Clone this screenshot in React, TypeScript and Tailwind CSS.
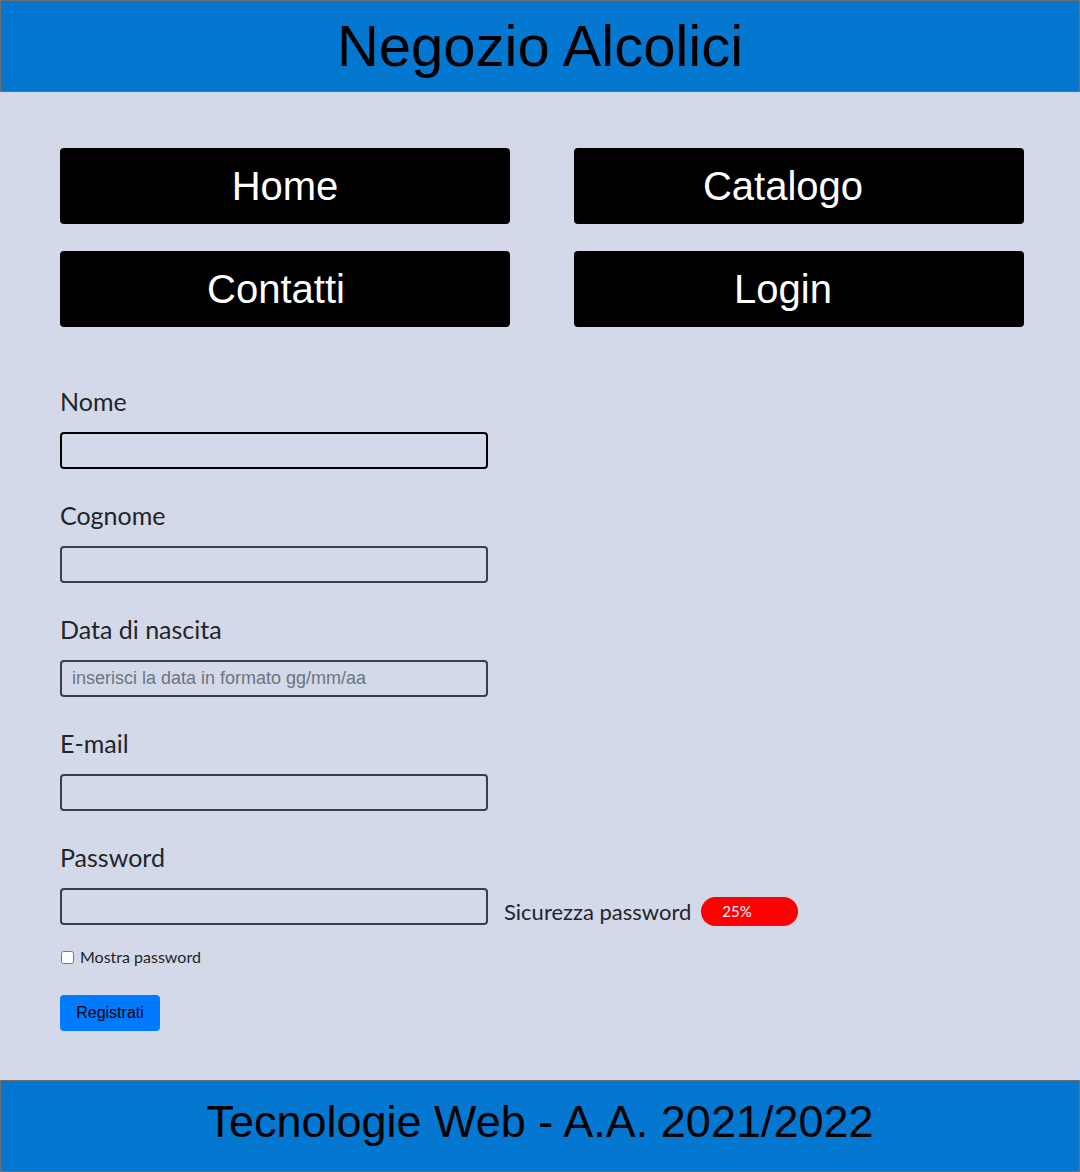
import React from "react"

const navItems = [
  { label: "Home", pad: "" },
  { label: "Catalogo", pad: "pr-[32px]" },
  { label: "Contatti", pad: "pr-[18px]" },
  { label: "Login", pad: "pr-[32px]" },
]

const fields = [
  { label: "Nome", placeholder: "", focused: true },
  { label: "Cognome", placeholder: "", focused: false },
  { label: "Data di nascita", placeholder: "inserisci la data in formato gg/mm/aa", focused: false },
  { label: "E-mail", placeholder: "", focused: false },
]

function Field({ label, placeholder, focused }: { label: string; placeholder: string; focused: boolean }) {
  return (
    <div className="mb-[28px]">
      <label className="block text-[25px] leading-[36px] mb-[13px] text-[#212529] font-['Lato',sans-serif]">{label}</label>
      <input
        type="text"
        placeholder={placeholder}
        className={
          "block w-[428px] h-[37px] rounded-[4px] border-2 bg-transparent px-[10px] text-[18px] font-['Liberation_Sans',Arial,sans-serif] placeholder:text-[#6c757d] outline-none " +
          (focused ? "border-black" : "border-[#3b3f45]")
        }
      />
    </div>
  )
}

export default function App() {
  return (
    <div className="min-h-screen flex flex-col bg-[#d3d9e9]">
      {/* Header */}
      <header className="h-[92px] flex items-center justify-center bg-[#0477d1] border border-[#6f6f6f]">
        <h1 className="text-[58px] leading-none text-black font-['Liberation_Sans',Arial,sans-serif]">Negozio Alcolici</h1>
      </header>

      {/* Content */}
      <main className="flex-1 px-[60px] pt-[56px] pb-[49px]">
        <nav className="grid grid-cols-2 gap-x-[64px] gap-y-[27px] w-[964px]">
          {navItems.map((item) => (
            <a
              key={item.label}
              href="#"
              className={
                "h-[76px] flex items-center justify-center rounded-[4px] bg-black text-white text-[40px] font-['Liberation_Sans',Arial,sans-serif] " +
                item.pad
              }
            >
              {item.label}
            </a>
          ))}
        </nav>

        <form className="mt-[56px]">
          {fields.map((f) => (
            <Field key={f.label} {...f} />
          ))}

          <div>
            <label className="block text-[25px] leading-[36px] mb-[13px] text-[#212529] font-['Lato',sans-serif]">Password</label>
            <div className="flex items-center h-[37px]">
              <input
                type="password"
                className="block w-[428px] h-[37px] rounded-[4px] border-2 border-[#3b3f45] bg-transparent px-[10px] outline-none"
              />
              <div className="flex items-center mt-[10px]">
                <span className="ml-[16px] text-[22px] leading-[32px] text-[#212529] font-['Lato',sans-serif]">Sicurezza password</span>
                <span className="ml-[10px] w-[97px] h-[29px] flex items-center pl-[21px] rounded-full bg-[#ff0000] text-white text-[15px] font-['Lato',sans-serif]">
                  25%
                </span>
              </div>
            </div>
          </div>

          <label className="mt-[21px] flex items-center gap-[6px] text-[16px] leading-[22px] text-[#212529] font-['Lato',sans-serif]">
            <input type="checkbox" className="w-[13px] h-[13px] ml-[1px]" />
            Mostra password
          </label>

          <button
            type="button"
            className="block mt-[27px] w-[100px] h-[36px] rounded-[4px] bg-[#007bff] text-black text-[16px] font-['Liberation_Sans',Arial,sans-serif]"
          >
            Registrati
          </button>
        </form>
      </main>

      {/* Footer */}
      <footer className="h-[92px] flex items-center justify-center pb-[10px] bg-[#0477d1] border border-[#6f6f6f]">
        <p className="text-[45px] leading-none text-black font-['Liberation_Sans',Arial,sans-serif]">Tecnologie Web - A.A. 2021/2022</p>
      </footer>
    </div>
  )
}
